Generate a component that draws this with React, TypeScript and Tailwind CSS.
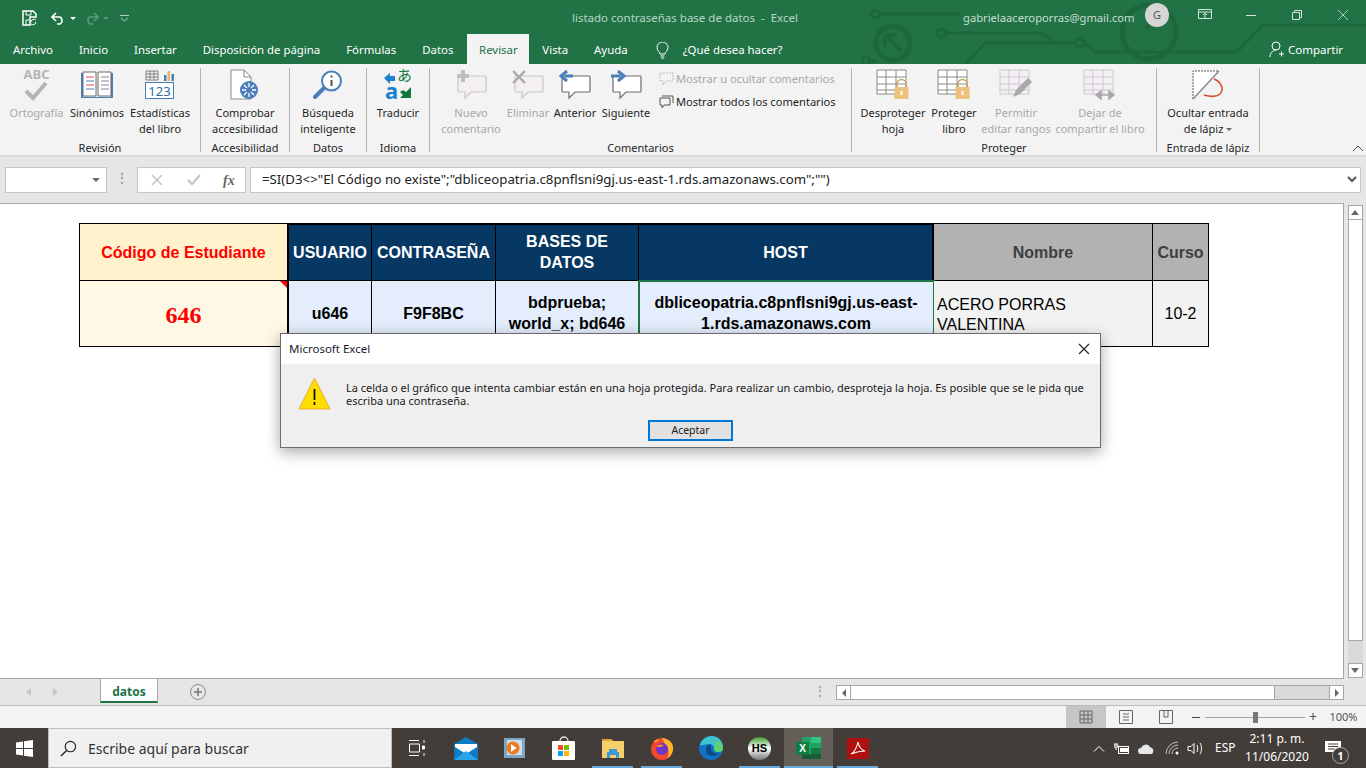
import { ReactNode } from "react";

const ui = "font-['Noto_Sans',sans-serif]";

function Circuit() {
  return (
    <svg className="absolute left-[860px] top-0" width="506" height="64" viewBox="0 0 506 64" fill="none" stroke="#1c673c" strokeWidth="3">
      <circle cx="15" cy="14" r="4" />
      <path d="M19 14H100" />
      <circle cx="33" cy="43" r="17" strokeWidth="5" />
      <path d="M25 35l16 16M25 35h12M25 35v12" strokeWidth="4" />
      <circle cx="6" cy="61" r="4" />
      <path d="M10 61H18" />
      <circle cx="81" cy="33" r="4" />
      <path d="M85 33H180L198 43M106 64L125 43H216" />
      <circle cx="220" cy="43" r="4" />
      <path d="M224 43L236 52H377L403 25H506" />
      <circle cx="289" cy="32" r="27" strokeWidth="5" />
      <path d="M280 5h20l-14 24" strokeWidth="4" />
    </svg>
  );
}

function TabLabel({ children, active }: { children: ReactNode; active?: boolean }) {
  if (active) {
    return <div className="w-[62px] ml-[1px] h-[30px] -mt-[2px] pt-[2px] flex items-center justify-center text-[11.4px] bg-[#f3f3f3] text-[#217346]">{children}</div>;
  }
  return <div className="h-[28px] flex items-center justify-center px-[13px] text-[11.4px] text-white whitespace-nowrap">{children}</div>;
}

function Group({ w, label, children }: { w: number; label: string; children: ReactNode }) {
  return (
    <div className="shrink-0 flex flex-col border-r border-[#b5b5b5] h-[84px] mt-[4px]" style={{ width: w }}>
      <div className="h-[71px] shrink-0 flex">{children}</div>
      <div className="h-[13px] text-center text-[#262626] text-[11px] leading-[18px] whitespace-nowrap">{label}</div>
    </div>
  );
}

function Btn({ w, icon, lines, off, caret }: { w: number; icon: ReactNode; lines: string[]; off?: boolean; caret?: boolean }) {
  return (
    <div className={"shrink-0 flex flex-col items-center text-[11px] leading-[16px] whitespace-nowrap " + (off ? "text-[#a8a8a8]" : "text-[#1f1f1f]")} style={{ width: w }}>
      <div className="h-[33px] mb-[4px] flex items-center justify-center">{icon}</div>
      {lines.map((l, i) => (
        <div key={l} className="flex items-center">
          {l}
          {caret && i === lines.length - 1 && <div className="ml-[3px] border-x-[3px] border-x-transparent border-t-[3px] border-t-[#666]" />}
        </div>
      ))}
    </div>
  );
}

function CommentIcon({ kind }: { kind: "new" | "del" | "prev" | "next" }) {
  const off = kind === "new" || kind === "del";
  return (
    <svg width="32" height="30" viewBox="0 0 32 30" fill="none">
      <path d="M4 6h26a1 1 0 0 1 1 1v14a1 1 0 0 1-1 1H16l-6 6v-6H4a1 1 0 0 1-1-1V7a1 1 0 0 1 1-1z" fill={off ? "#f3eff3" : "#fff"} stroke={off ? "#c9c6c9" : "#6d6d6d"} strokeWidth="1.2" />
      {kind === "new" && <path d="M8 0v12M2 6h12" stroke="#bdbdbd" strokeWidth="4" />}
      {kind === "del" && <path d="M1 1l12 12M13 1L1 13" stroke="#a9a9a9" strokeWidth="2.4" />}
      {kind === "prev" && <path d="M14 6H6M8 1L2 6l6 5" stroke="#4a7ebb" strokeWidth="3" />}
      {kind === "next" && <path d="M1 6h9M8 1l6 5-6 5" stroke="#4a7ebb" strokeWidth="3" />}
    </svg>
  );
}

function GridIcon({ lock, off, pen, arrows }: { lock?: boolean; off?: boolean; pen?: boolean; arrows?: boolean }) {
  const c = off ? "#cfc9cf" : "#8a8a8a";
  return (
    <svg width="34" height="32" viewBox="0 0 34 32" fill="none">
      <path d="M1 1h29v24H1z" fill={off ? "#f4eff5" : "#fff"} stroke={c} />
      <path d="M1 8h29M1 15h29M1 21h29M10 1v24M20 1v24" stroke={c} />
      {lock && (
        <g>
          <path d="M21 18v-3a4.500 4.500 0 0 1 9 0v3" stroke="#c9a468" strokeWidth="1.6" />
          <rect x="18.500" y="18" width="14" height="12" fill="#edc27e" />
          <path d="M25.500 22v4" stroke="#fff" strokeWidth="2" />
        </g>
      )}
      {pen && <path d="M14 28l3-7 12-12 4 4-12 12z" fill="#a9a9a9" />}
      {arrows && <path d="M14 26h16M18 22l-5 4 5 4zM26 22l5 4-5 4z" stroke="#a9a9a9" strokeWidth="1.500" fill="#a9a9a9" />}
    </svg>
  );
}

function Ribbon() {
  return (
    <div className="h-[93px] bg-[#f3f3f3] border-b-2 border-[#d9d9d9] flex relative">
      <Group w={201} label="Revisión">
        <div className="w-[2px]" />
        <Btn w={69} off lines={["Ortografía"]} icon={
          <div className="relative w-[30px] h-[33px]">
            <div className="text-[13px] font-bold text-[#b5b5b5] leading-[13px] text-center">ABC</div>
            <svg className="absolute left-[2px] top-[13px]" width="24" height="20" viewBox="0 0 24 20" fill="none"><path d="M2 10l7 7L22 2" stroke="#b5b5b5" strokeWidth="4" /></svg>
          </div>
        } />
        <Btn w={52} lines={["Sinónimos"]} icon={
          <svg width="32" height="28" viewBox="0 0 32 28" fill="none">
            <path d="M0 2h2v24h28V2h2v25H0z" fill="#4a7ebb" />
            <path d="M2 1h13v24H2zM17 1h13v24H17z" fill="#fff" stroke="#6b6b6b" />
            <path d="M5 6h8M5 14h8" stroke="#d9534f" /><path d="M5 10h8M5 18h8" stroke="#4a7ebb" /><path d="M20 6h8M20 10h8M20 14h8M20 18h8" stroke="#888" />
          </svg>
        } />
        <Btn w={74} lines={["Estadísticas", "del libro"]} icon={
          <svg width="30" height="30" viewBox="0 0 30 30" fill="none">
            <path d="M1 1h12v9H1zM1 4h12M1 7h12M5 1v9M9 1v9" stroke="#808080" />
            <path d="M19 5h2.500v6H19z" fill="#4a7ebb" /><path d="M22.500 1H25v10h-2.500z" fill="#e8b76a" /><path d="M26.500 4H29v7h-2.500z" fill="#4a7ebb" />
            <rect x="0.500" y="12.500" width="28" height="16" fill="#fff" stroke="#4a7ebb" />
            <text x="14.500" y="25.500" textAnchor="middle" fontSize="13" fill="#2f6ca8" fontFamily="Noto Sans">123</text>
          </svg>
        } />
      </Group>
      <Group w={89} label="Accesibilidad">
        <Btn w={88} lines={["Comprobar", "accesibilidad"]} icon={
          <svg width="30" height="32" viewBox="0 0 30 32" fill="none">
            <path d="M1 1h13l7 7v22H1z" fill="#fff" stroke="#8a8a8a" /><path d="M14 1v7h7" stroke="#8a8a8a" />
            <circle cx="19" cy="21" r="9" fill="#4a7ebb" />
            <path d="M19 14v14M12 21h14M14 16l10 10M24 16l-10 10" stroke="#fff" strokeWidth="1.300" />
            <circle cx="19" cy="21" r="3" fill="#4a7ebb" />
          </svg>
        } />
      </Group>
      <Group w={77} label="Datos">
        <Btn w={76} lines={["Búsqueda", "inteligente"]} icon={
          <svg width="30" height="30" viewBox="0 0 30 30" fill="none">
            <circle cx="18.500" cy="11" r="9.500" fill="#fff" stroke="#4a7ebb" strokeWidth="2" />
            <path d="M11 18L2 27" stroke="#4a7ebb" strokeWidth="4" strokeLinecap="round" />
            <path d="M18.500 10v6M18.500 5.500v2" stroke="#555" strokeWidth="2" />
          </svg>
        } />
      </Group>
      <Group w={63} label="Idioma">
        <Btn w={62} lines={["Traducir"]} icon={
          <div className="relative w-[28px] h-[30px]">
            <svg className="absolute left-0 top-0" width="28" height="30" viewBox="0 0 28 30" fill="none">
              <path d="M0 8l6-5v3h5v5H6v3z" fill="#1a7fd1" />
              <path d="M27 17v11H16l3-3-3-3 3-2 3 2z" fill="#0d7a3a" />
            </svg>
            <span className="absolute right-[0px] top-[-3px] text-[15px] leading-[16px] text-[#0d7a3a] font-['Noto_Sans_CJK_JP',sans-serif]">あ</span>
            <span className="absolute left-[1px] top-[9px] text-[22px] leading-[22px] font-bold text-[#1a7fd1]">a</span>
          </div>
        } />
      </Group>
      <Group w={422} label="Comentarios">
        <div className="w-[2px]" />
        <Btn w={78} off lines={["Nuevo", "comentario"]} icon={<CommentIcon kind="new" />} />
        <Btn w={36} off lines={["Eliminar"]} icon={<CommentIcon kind="del" />} />
        <Btn w={58} lines={["Anterior"]} icon={<CommentIcon kind="prev" />} />
        <Btn w={44} lines={["Siguiente"]} icon={<CommentIcon kind="next" />} />
        <div className="flex flex-col text-[11.1px] ml-[11px] pt-[3px] gap-[7px] whitespace-nowrap">
          <div className="flex items-center gap-[2px] text-[#a8a8a8] h-[16px]">
            <svg width="15" height="14" viewBox="0 0 15 14" fill="none"><path d="M1 1h13v8H7l-3 4V9H1z" stroke="#b9b9b9" strokeDasharray="2 1" /></svg>
            Mostrar u ocultar comentarios
          </div>
          <div className="flex items-center gap-[2px] text-[#1f1f1f] h-[16px]">
            <svg width="15" height="14" viewBox="0 0 15 14" fill="none"><path d="M3 1h11v7M1 3h10v7H5l-2 3v-3H1z" stroke="#555" /></svg>
            Mostrar todos los comentarios
          </div>
        </div>
      </Group>
      <Group w={305} label="Proteger">
        <Btn w={82} lines={["Desproteger", "hoja"]} icon={<GridIcon lock />} />
        <Btn w={40} lines={["Proteger", "libro"]} icon={<GridIcon lock />} />
        <Btn w={84} off lines={["Permitir", "editar rangos"]} icon={<GridIcon off pen />} />
        <Btn w={84} off lines={["Dejar de", "compartir el libro"]} icon={<GridIcon off arrows />} />
      </Group>
      <Group w={103} label="Entrada de lápiz">
        <Btn w={102} caret lines={["Ocultar entrada", "de lápiz"]} icon={
          <svg width="32" height="30" viewBox="0 0 32 30" fill="none">
            <path d="M1 1h26L1 29z" fill="#fff" />
            <path d="M1 29V1h26" stroke="#555" strokeDasharray="2 1" />
            <path d="M27 1L1 29" stroke="#8a8a8a" strokeWidth="1.500" />
            <path d="M22 9c8 3 10 11 6 15-3 3-10 3-16 1" stroke="#d9512c" strokeWidth="1.600" />
          </svg>
        } />
      </Group>
      <svg className="absolute right-[2px] bottom-[3px]" width="12" height="7" viewBox="0 0 12 7" fill="none"><path d="M1 6l5-5 5 5" stroke="#555" /></svg>
    </div>
  );
}

function FormulaBar() {
  return (
    <div className="h-[46px] bg-[#e6e6e6] flex items-start pt-[10px] pl-[5px] pr-[5px]">
      <div className="w-[102px] h-[26px] bg-white border border-[#c6c6c6] flex items-center justify-end pr-[6px]">
        <div className="border-x-[4px] border-x-transparent border-t-[4px] border-t-[#6b6b6b]" />
      </div>
      <div className="w-[30px] text-center text-[#9a9a9a] leading-[22px] text-[12px] font-bold">⋮</div>
      <div className="w-[109px] h-[26px] bg-white border border-[#c6c6c6] flex items-center text-[#b5b5b5]">
        <svg className="ml-[13px]" width="12" height="12" viewBox="0 0 12 12" fill="none"><path d="M1 1l10 10M11 1L1 11" stroke="#c4c4c4" strokeWidth="1.500" /></svg>
        <svg className="ml-[24px]" width="14" height="12" viewBox="0 0 14 12" fill="none"><path d="M1 6l4 4 8-9" stroke="#c4c4c4" strokeWidth="2" /></svg>
        <span className="ml-[22px] text-[14px] italic text-[#666] font-['Liberation_Serif',serif] font-bold">fx</span>
      </div>
      <div className="w-[4px]" />
      <div className="flex-1 h-[26px] bg-white border border-[#c6c6c6] flex items-center pl-[11px] text-[13.25px] text-[#222] relative whitespace-nowrap font-['Noto_Sans',sans-serif]">
        =SI(D3&lt;&gt;"El Código no existe";"dbliceopatria.c8pnflsni9gj.us-east-1.rds.amazonaws.com";"")
        <svg className="absolute right-[3px] top-[8px]" width="10" height="8" viewBox="0 0 10 8" fill="none"><path d="M1 1l4 4 4-4" stroke="#555" strokeWidth="2" /></svg>
      </div>
    </div>
  );
}

function Cell({ className, children }: { className: string; children: ReactNode }) {
  return <div className={"flex items-center justify-center text-center border-[#000] leading-[21px] " + className}>{children}</div>;
}

function Sheet() {
  const head = "bg-[#073763] text-white font-bold text-[16px] border-r border-b border-t-2 -mt-px";
  const val = "bg-[#e3edfc] text-black font-bold text-[16px] border-r border-b pb-[1px]";
  return (
    <div className="h-[476px] flex bg-[#e6e6e6]">
      <div className="flex-1 bg-white border-t border-r border-b border-[#a6a6a6] pl-[79px] pt-[19px] font-['Liberation_Sans',sans-serif]">
        <div className="grid w-[1130px] grid-cols-[209px_83px_124px_143px_295px_219px_56px] grid-rows-[57px_66px] border-t border-l border-black">
          <Cell className="bg-[#fff2cc] text-[#ff0000] font-bold text-[16px] border-r-2 border-b">Código de Estudiante</Cell>
          <Cell className={head}>USUARIO</Cell>
          <Cell className={head}>CONTRASEÑA</Cell>
          <Cell className={head + " pb-[2px]"}>BASES DE<br />DATOS</Cell>
          <Cell className={head + " border-r-2"}>HOST</Cell>
          <Cell className="bg-[#b2b2b2] text-[#3f3f3f] font-bold text-[16px] border-r border-b">Nombre</Cell>
          <Cell className="bg-[#b2b2b2] text-[#3f3f3f] font-bold text-[16px] border-r border-b">Curso</Cell>
          <div className="relative flex items-center justify-center pt-[3px] bg-[#fff8e5] text-[#ff0000] font-bold text-[24px] border-r-2 border-b border-black font-['Liberation_Serif',serif]">
            646
            <div className="absolute right-0 top-0 border-l-[7px] border-l-transparent border-t-[7px] border-t-[#ff0000]" />
          </div>
          <Cell className={val}>u646</Cell>
          <Cell className={val}>F9F8BC</Cell>
          <Cell className={val}>bdprueba;<br />world_x; bd646</Cell>
          <Cell className={val + " outline-2 -outline-offset-1 outline-[#217346]"}>dbliceopatria.c8pnflsni9gj.us-east-<br />1.rds.amazonaws.com</Cell>
          <div className="flex items-center bg-[#f2f2f2] text-black text-[16px] leading-[20px] border-r border-b border-black pl-[3px] pt-[3px]">ACERO PORRAS<br />VALENTINA</div>
          <Cell className="bg-[#f2f2f2] text-black text-[16px] border-r border-b">10-2</Cell>
        </div>
      </div>
      <div className="w-[22px] flex flex-col items-center pt-[2px] pb-[1px]">
        <div className="w-[15px] h-[15px] bg-white border border-[#a6a6a6] flex items-center justify-center">
          <div className="border-x-[4px] border-x-transparent border-b-[5px] border-b-[#666]" />
        </div>
        <div className="w-[15px] h-[422px] bg-white border border-[#a6a6a6] -mt-px" />
        <div className="w-[15px] flex-1 bg-[#d9d9d9]" />
        <div className="w-[15px] h-[15px] bg-white border border-[#a6a6a6] flex items-center justify-center">
          <div className="border-x-[4px] border-x-transparent border-t-[5px] border-t-[#666]" />
        </div>
      </div>
    </div>
  );
}

function SheetTabs() {
  return (
    <div className="h-[27px] bg-[#e6e6e6] border-b border-[#bdbdbd] flex items-start">
      <div className="w-[100px] h-[26px] flex items-center pl-[26px] gap-[22px]">
        <div className="border-y-[4px] border-y-transparent border-r-[5px] border-r-[#c6c6c6]" />
        <div className="border-y-[4px] border-y-transparent border-l-[5px] border-l-[#c6c6c6]" />
      </div>
      <div className="w-[58px] h-[24px] pt-[3px] bg-white border-x border-[#a6a6a6] border-b-2 border-b-[#217346] flex items-center justify-center text-[12px] font-bold text-[#217346]">datos</div>
      <div className="ml-[32px] mt-[5px] w-[16px] h-[16px] rounded-full border border-[#8a8a8a] flex items-center justify-center">
        <svg width="10" height="10" viewBox="0 0 10 10"><path d="M5 1v8M1 5h8" stroke="#777" strokeWidth="1.500" /></svg>
      </div>
      <div className="ml-[608px] mt-[4px] text-[#a6a6a6] text-[12px] leading-[16px] font-bold">⋮</div>
      <div className="ml-[10px] mt-[6px] h-[15px] w-[508px] flex border border-[#a6a6a6] bg-[#d9d9d9]">
        <div className="w-[14px] bg-white border-r border-[#a6a6a6] flex items-center justify-center">
          <div className="border-y-[4px] border-y-transparent border-r-[4px] border-r-[#666]" />
        </div>
        <div className="w-[424px] bg-white border-r border-[#a6a6a6]" />
        <div className="flex-1" />
        <div className="w-[14px] bg-white border-l border-[#a6a6a6] flex items-center justify-center">
          <div className="border-y-[4px] border-y-transparent border-l-[4px] border-l-[#666]" />
        </div>
      </div>
    </div>
  );
}

function StatusBar() {
  return (
    <div className="h-[22px] bg-[#f3f3f3] flex justify-end items-center text-[#555]">
      <div className="w-[40px] h-[22px] bg-[#c6c6c6] flex items-center justify-center">
        <svg width="14" height="14" viewBox="0 0 14 14" fill="none"><path d="M1 1h12v12H1zM1 5h12M1 9h12M5 1v12M9 1v12" stroke="#666" /></svg>
      </div>
      <div className="w-[40px] flex items-center justify-center">
        <svg width="14" height="14" viewBox="0 0 14 14" fill="none"><path d="M.5.500h13v13H.500zM4 4h6M4 7h6M4 10h6" stroke="#666" /></svg>
      </div>
      <div className="w-[40px] flex items-center justify-center">
        <svg width="14" height="14" viewBox="0 0 14 14" fill="none"><path d="M.5.500h13v13H.500zM5 .500V7h4V.500" stroke="#666" /></svg>
      </div>
      <div className="w-[19px] flex justify-center"><div className="w-[8px] h-px bg-[#444]" /></div>
      <div className="relative w-[100px] h-px bg-[#a6a6a6]">
        <div className="absolute left-[48px] -top-[5px] w-[5px] h-[11px] bg-[#777]" />
      </div>
      <div className="w-[16px] text-center text-[14px] leading-[14px]">+</div>
      <div className="w-[45px] text-[11px] text-center">100%</div>
    </div>
  );
}

function TaskSlot({ children, on, active }: { children: ReactNode; on?: boolean; active?: boolean }) {
  return (
    <div className={"relative w-[49px] h-[40px] flex items-center justify-center shrink-0 " + (active ? "bg-[#645f59]" : "")}>
      {children}
      {on && <div className={"absolute bottom-0 h-[2px] bg-[#69a8db] " + (active ? "left-0 right-0" : "left-[4px] right-[4px]")} />}
    </div>
  );
}

function Taskbar() {
  return (
    <div className="h-[40px] bg-[#423d38] flex items-center text-white">
      <div className="w-[48px] flex justify-center">
        <svg width="17" height="17" viewBox="0 0 17 17" fill="#fff"><path d="M0 2.500l7-1v6.500H0zM8 1.300L17 0v8H8zM0 9h7v6.500l-7-1zM8 9h9v8l-9-1.300z" /></svg>
      </div>
      <div className="w-[344px] h-[40px] bg-[#f0f0f0] border border-[#bdbdbd] flex items-center pl-[11px] text-[#333] text-[14px]">
        <svg width="17" height="17" viewBox="0 0 18 18" fill="none"><circle cx="11" cy="7" r="5.500" stroke="#222" strokeWidth="1.200" /><path d="M7 11l-6 6" stroke="#222" strokeWidth="1.500" /></svg>
        <span className="ml-[11px]">Escribe aquí para buscar</span>
      </div>
      <div className="w-[49px] flex justify-center">
        <svg width="16" height="16" viewBox="0 0 16 16" fill="none" stroke="#fff"><path d="M0 .500h10M0 15.500h10M.500 4h10v8H.500zM15 0v3M15 13v3" /><path d="M13.500 6h2v3h-2z" fill="#fff" /></svg>
      </div>
      <TaskSlot>
        <svg width="24" height="23" viewBox="0 0 24 23"><path d="M12 0L0 7v16h24V7z" fill="#0f7bc4" /><path d="M1 7h22v3l-11 7L1 10z" fill="#fff" /><path d="M0 23l12-9 12 9z" fill="#29a4e8" /></svg>
      </TaskSlot>
      <TaskSlot>
        <svg width="21" height="20" viewBox="0 0 21 20"><rect width="21" height="20" fill="#7ba6c4" /><rect x="3" y="2" width="15" height="15" fill="#cfdde8" /><circle cx="9" cy="10" r="6.500" fill="#ec7a1c" /><path d="M7 6l5.500 4-5.500 4z" fill="#fff" /></svg>
      </TaskSlot>
      <TaskSlot>
        <svg width="24" height="24" viewBox="0 0 24 24"><path d="M8 5a4 4 0 0 1 8 0" stroke="#ddd" fill="none" strokeWidth="1.300" /><rect y="5" width="23" height="19" rx="1" fill="#fff" /><path d="M6 9h5v5H6z" fill="#f25022" /><path d="M12 9h5v5h-5z" fill="#7fba00" /><path d="M6 15h5v5H6z" fill="#00a4ef" /><path d="M12 15h5v5h-5z" fill="#ffb900" /></svg>
      </TaskSlot>
      <TaskSlot on>
        <svg width="22" height="19" viewBox="0 0 22 19"><path d="M0 0h9l2 2h11v17H0z" fill="#f6cf6b" /><path d="M0 0h9l2 2H0z" fill="#d9a53a" /><path d="M7 10h8v3h2v6h-3v-3H8v3H5v-6h2z" fill="#3a9ad9" /></svg>
      </TaskSlot>
      <TaskSlot on>
        <svg width="24" height="24" viewBox="0 0 24 24"><circle cx="12" cy="13" r="11" fill="#f0492c" /><path d="M12 2c8 1 12 6 11 12-1 4-3 7-6 8 3-4 2-9-1-12z" fill="#ffb62a" /><path d="M3 6c2-2 4-3 6-3l-2 3z" fill="#ff9a2a" /><circle cx="12" cy="13" r="6" fill="#6f35c9" /><path d="M6 11c2-3 6-3 8-2l-3 2z" fill="#ff8a2a" /></svg>
      </TaskSlot>
      <TaskSlot>
        <svg width="24" height="24" viewBox="0 0 24 24"><circle cx="12" cy="12" r="12" fill="#1171c4" /><path d="M1 9C3 3 8 0 13 0c6 0 11 5 11 11 0 3-2 5-5 5-2 0-4-1-4-3 1-3-2-5-5-5-4 0-7 2-9 1z" fill="#3fc2cf" /><path d="M18 4c4 2 6 5 6 8 0 3-2 4-5 4-2 0-4-1-4-3z" fill="#5fd06f" /><path d="M12 9c-3 0-5 2-5 5s2 6 6 6c3 0 5-1 7-3-3 1-7 0-8-3z" fill="#0c4a86" /></svg>
      </TaskSlot>
      <TaskSlot on>
        <div className="relative w-[23px] h-[23px] rounded-full bg-gradient-to-b from-[#3f9a2f] via-[#ffffff] to-[#777] flex items-center justify-center">
          <span className="text-[11px] font-bold text-black font-['Liberation_Sans',sans-serif]">HS</span>
        </div>
      </TaskSlot>
      <TaskSlot on active>
        <svg width="25" height="22" viewBox="0 0 25 22">
          <rect x="6" y="0" width="19" height="22" fill="#21a366" /><rect x="15" y="0" width="10" height="6" fill="#33c481" /><rect x="15" y="11" width="10" height="6" fill="#107c41" /><rect x="6" y="17" width="19" height="5" fill="#185c37" /><rect x="0" y="5" width="13" height="13" fill="#107c41" />
          <text x="6.500" y="15" textAnchor="middle" fontSize="10" fontWeight="bold" fill="#fff" fontFamily="Liberation Sans">X</text>
        </svg>
      </TaskSlot>
      <TaskSlot on>
        <svg width="22" height="21" viewBox="0 0 22 21"><rect width="22" height="21" fill="#b01010" /><path d="M4 16c3-1 6-7 7-12 1 5 3 8 7 9-5 0-9 1-14 3z" fill="none" stroke="#fff" strokeWidth="1.100" /></svg>
      </TaskSlot>
      <div className="flex-1" />
      <div className="flex items-center">
        <svg className="mr-[9px]" width="12" height="7" viewBox="0 0 12 7" fill="none"><path d="M1 6.500l5-5 5 5" stroke="#fff" /></svg>
        <svg className="mr-[8px]" width="16" height="11" viewBox="0 0 16 11" fill="none"><rect x="4.500" y="3.500" width="10" height="7" stroke="#fff" /><rect x="6" y="5" width="8" height="4" fill="#fff" /><path d="M1 0v2M3 0v2M0 2h4v2H0zM2 4v3" stroke="#fff" /></svg>
        <svg className="mr-[10px]" width="17" height="11" viewBox="0 0 17 11"><path d="M3 11a3 3 0 0 1 0-6 5 5 0 0 1 9-1 4 4 0 0 1 2 7z" fill="#e6e6e6" /></svg>
        <svg className="mr-[7px]" width="15" height="14" viewBox="0 0 15 14" fill="none" stroke="#bdbdbd"><path d="M1 13A12 12 0 0 1 13 1M4 13a9 9 0 0 1 9-9M7 13a6 6 0 0 1 6-6" /><circle cx="12" cy="12" r="1.500" fill="#fff" stroke="none" /></svg>
        <svg className="mr-[12px]" width="16" height="13" viewBox="0 0 16 13" fill="none" stroke="#fff"><path d="M1 4.500h3l3-3v10l-3-3H1zM10 3c1 2 1 5 0 7M13 1c2 3 2 8 0 11" /></svg>
        <span className="w-[20px] text-[12px] mr-[3px] whitespace-nowrap">ESP</span>
        <div className="w-[78px] text-center text-[12px] leading-[18px] whitespace-nowrap">2:11 p. m.<br />11/06/2020</div>
        <div className="relative w-[41px] ml-[9px] flex justify-start">
          <svg width="16" height="15" viewBox="0 0 16 15"><path d="M0 0h16v11h-4l-1 3-3-3H0z" fill="#fff" /><path d="M3 3h10M3 5.500h10M3 8h7" stroke="#423d38" /></svg>
          <div className="absolute left-[7px] top-[6px] w-[17px] h-[17px] rounded-full bg-[#423d38] border border-[#aaa] text-[11px] font-bold leading-[15px] text-center">1</div>
        </div>
      </div>
    </div>
  );
}

function ProtectedDialog() {
  return (
    <div className="absolute left-[280px] top-[333px] w-[821px] h-[115px] bg-[#efefef] border border-[#6b6b6b] shadow-[0_4px_14px_rgba(0,0,0,0.35)] z-10">
      <div className="h-[30px] bg-white flex items-center justify-between pl-[8px] pr-[10px] text-[11.5px] text-[#1a1a2e]">
        Microsoft Excel
        <svg width="12" height="12" viewBox="0 0 12 12" fill="none"><path d="M1 1l10 10M11 1L1 11" stroke="#222" strokeWidth="1.100" /></svg>
      </div>
      <div className="flex pl-[17px] pt-[13px]">
        <svg className="shrink-0" width="33" height="33" viewBox="0 0 33 33"><path d="M16.500 1L32 32H1z" fill="#ffdf00" stroke="#f0a830" strokeLinejoin="round" /><path d="M16.500 12v11M16.500 25v3" stroke="#111" strokeWidth="1.800" /></svg>
        <div className="ml-[15px] w-[745px] text-[11px] leading-[13px] text-[#1a1a1a] pt-[4px]">
          La celda o el gráfico que intenta cambiar están en una hoja protegida. Para realizar un cambio, desproteja la hoja. Es posible que se le pida que escriba una contraseña.
        </div>
      </div>
      <div className="absolute left-[367px] bottom-[6px] w-[85px] h-[21px] bg-[#e1e1e1] border-2 border-[#0078d7] flex items-center justify-center text-[10.5px] text-[#1a1a1a]">Aceptar</div>
    </div>
  );
}

export default function App() {
  return (
    <div className={ui + " relative w-[1366px] h-[768px] overflow-hidden bg-white"}>
      <div className="relative h-[64px] bg-[#217346] overflow-hidden">
        <Circuit />
        <div className="relative h-[36px] flex items-center">
          <svg className="ml-[22px]" width="16" height="16" viewBox="0 0 16 16" fill="none"><path d="M1 1h10l3 3v3H8v8H1z" stroke="#fff" strokeWidth="1.500" /><path d="M4 1v4h5V1M4 15v-5h3" stroke="#fff" /><path d="M9 12a3 3 0 0 1 5-2M14 12a3 3 0 0 1-5 2" stroke="#fff" /></svg>
          <svg className="ml-[13px]" width="15" height="13" viewBox="0 0 15 13" fill="none"><path d="M5 1L1 5l4 4M1 5h8a4 4 0 0 1 0 7H6" stroke="#fff" strokeWidth="1.600" /></svg>
          <div className="ml-[4px] border-x-[3px] border-x-transparent border-t-[3px] border-t-white" />
          <svg className="ml-[8px]" width="15" height="13" viewBox="0 0 15 13" fill="none"><path d="M10 1l4 4-4 4M14 5H6a4 4 0 0 0 0 7h3" stroke="#5b9a78" strokeWidth="1.600" /></svg>
          <div className="ml-[4px] border-x-[3px] border-x-transparent border-t-[3px] border-t-[#5b9a78]" />
          <svg className="ml-[11px]" width="9" height="7" viewBox="0 0 9 7" fill="none"><path d="M0 .500h9M1 3l3.500 3L8 3" stroke="#a8cdb8" /></svg>
          <div className="absolute left-[572px] text-[11.5px] text-[#b9d5c5] whitespace-pre">listado contraseñas base de datos  -  Excel</div>
          <div className="absolute left-[963px] text-[11.2px] text-[#c8ddd0] whitespace-nowrap">gabrielaaceroporras@gmail.com</div>
          <div className="absolute left-[1145px] top-[3px] w-[24px] h-[24px] rounded-full bg-[#d6d6d6] flex items-center justify-center text-[11px] text-[#555]">G</div>
          <svg className="absolute left-[1198px] top-[9px]" width="14" height="12" viewBox="0 0 14 12" fill="none"><path d="M.5.500h13v9H.500zM.5 3h13M7 9V4M5 6l2-2 2 2" stroke="#d5e5db" /></svg>
          <div className="absolute left-[1246px] top-[15px] w-[10px] h-px bg-[#d5e5db]" />
          <svg className="absolute left-[1292px] top-[10px]" width="10" height="10" viewBox="0 0 10 10" fill="none"><path d="M.5 2.500h7v7h-7zM2.500 2.500v-2h7v7h-2" stroke="#d5e5db" /></svg>
          <svg className="absolute left-[1338px] top-[10px]" width="10" height="10" viewBox="0 0 10 10" fill="none"><path d="M0 0l10 10M10 0L0 10" stroke="#a8cdb8" /></svg>
        </div>
        <div className="relative h-[28px] flex items-center">
          <TabLabel>Archivo</TabLabel>
          <TabLabel>Inicio</TabLabel>
          <TabLabel>Insertar</TabLabel>
          <TabLabel>Disposición de página</TabLabel>
          <TabLabel>Fórmulas</TabLabel>
          <TabLabel>Datos</TabLabel>
          <TabLabel active>Revisar</TabLabel>
          <TabLabel>Vista</TabLabel>
          <TabLabel>Ayuda</TabLabel>
          <svg className="ml-[15px]" width="13" height="17" viewBox="0 0 13 17" fill="none"><path d="M4 12c0-2-3-3-3-6.500a5.500 5.500 0 0 1 11 0C12 9 9 10 9 12zM4.500 14h4M5 16h3" stroke="#fff" /></svg>
          <div className="ml-[14px] text-[11.4px] text-white">¿Qué desea hacer?</div>
          <div className="absolute left-[1269px] top-[5px] flex items-center gap-[4px] text-[11.5px] text-white">
            <svg width="15" height="17" viewBox="0 0 15 17" fill="none"><circle cx="7" cy="5" r="4" stroke="#fff" /><path d="M1 16c0-4 2-6 6-7M10 13h5M12.500 10.500v5" stroke="#fff" /></svg>
            Compartir
          </div>
        </div>
      </div>
      <Ribbon />
      <FormulaBar />
      <Sheet />
      <SheetTabs />
      <StatusBar />
      <Taskbar />
      <ProtectedDialog />
    </div>
  );
}
